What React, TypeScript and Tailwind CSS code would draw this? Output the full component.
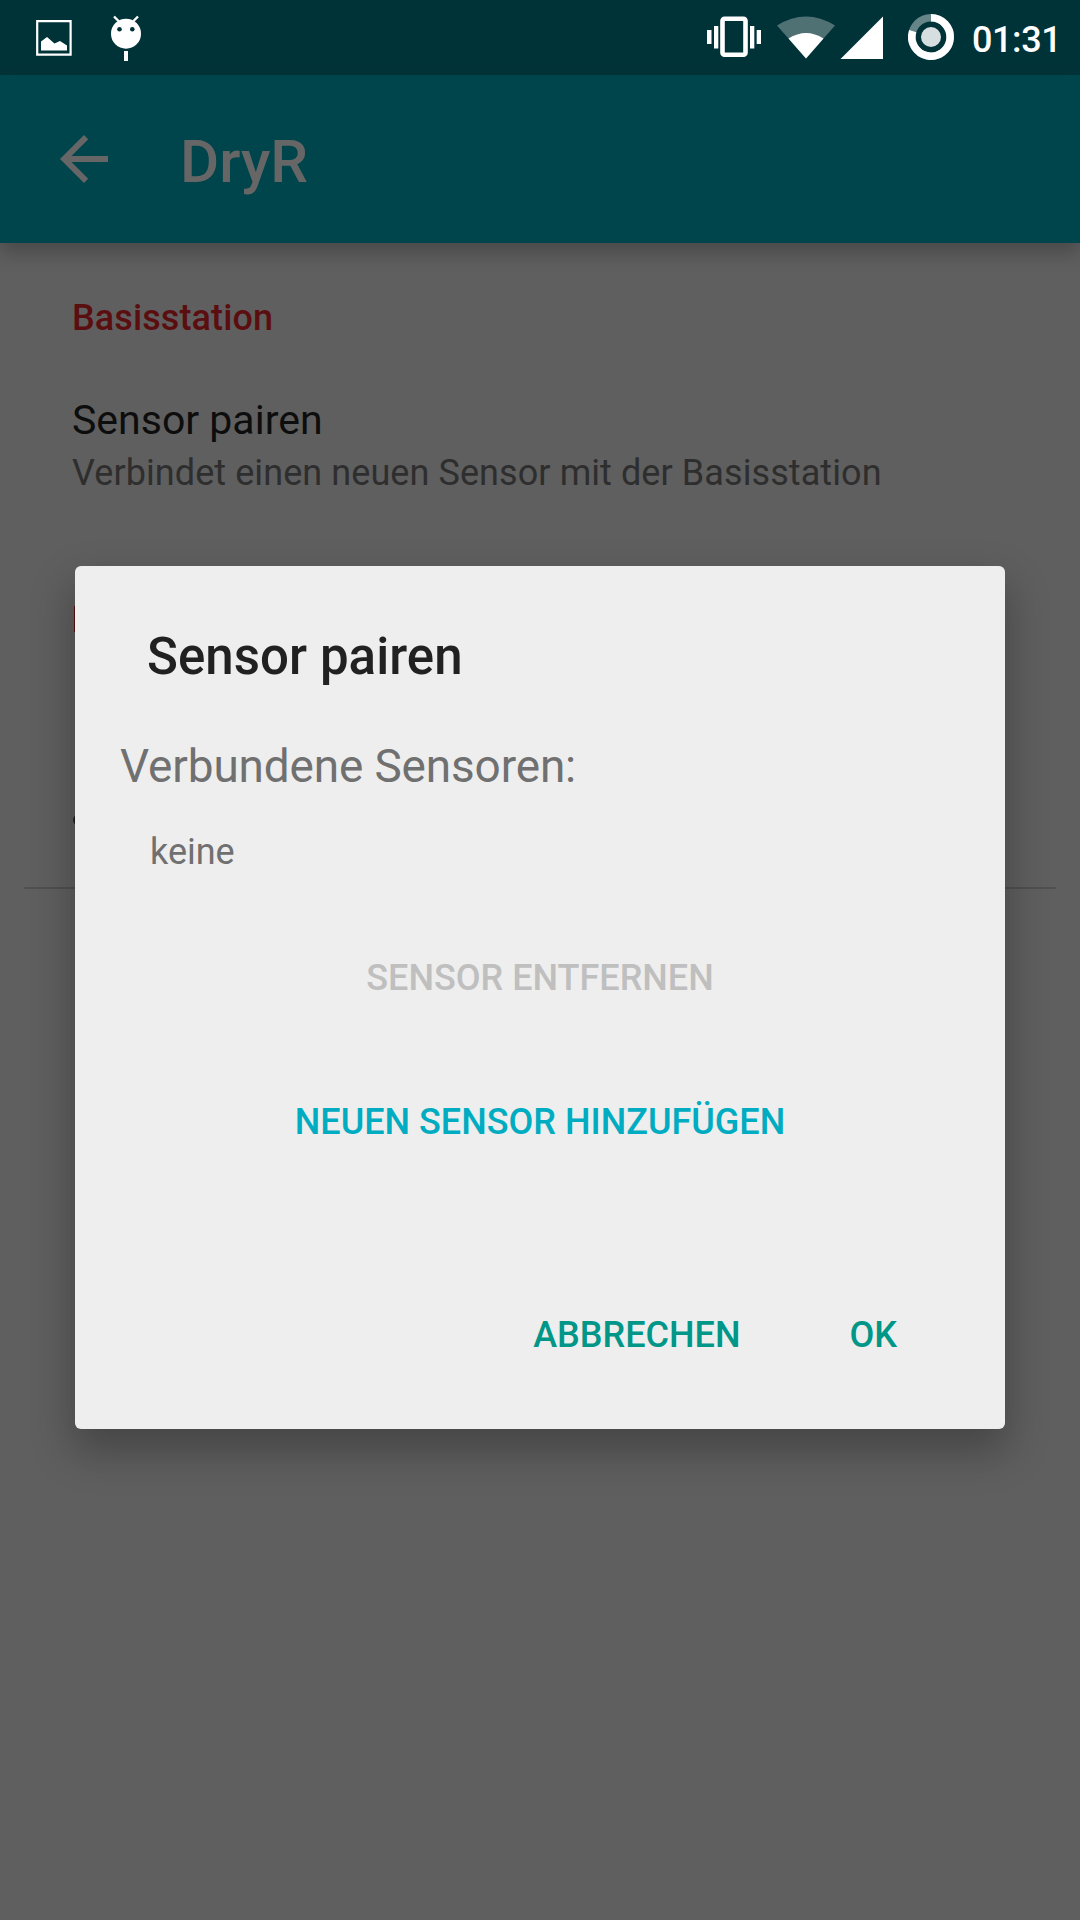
import React from "react";

function StatusBar() {
  return (
    <header className="flex h-[75px] items-center justify-between bg-[#003338] text-white">
      <svg className="h-[75px] w-[200px]" viewBox="0 0 200 75">
        <path d="M37.2 21.2H70.6V54.6H37.2Z" fill="none" stroke="#fff" strokeWidth="2.2" />
        <path d="M41 50.5V41.5L47 37L54.5 43.5L60 41L67 45.5V50.5Z" fill="#fff" />
        <circle cx="126" cy="33.7" r="15" fill="#fff" />
        <path d="M114 16.5L119 21.5M138 16.5L133 21.5" stroke="#fff" strokeWidth="2.4" />
        <circle cx="119.5" cy="29.3" r="2.3" fill="#003338" />
        <circle cx="132.3" cy="29.3" r="2.3" fill="#003338" />
        <path d="M124 51H128V61H124Z" fill="#fff" />
      </svg>
      <div className="flex items-center">
        <svg className="h-[75px] w-[270px]" viewBox="690 0 270 75">
          <rect x="722.5" y="18.7" width="23" height="36" rx="2" fill="none" stroke="#fff" strokeWidth="4.6" />
          <path d="M707 30H711.5V44H707ZM714 26H718.3V48.5H714ZM750 26H754.3V48.5H750ZM756.7 30H761V44H756.7Z" fill="#fff" />
          <path d="M806 58.5L777 25.5Q806 7.5 835 25.5Z" fill="#4f7174" />
          <path d="M806 58.5L788.5 38.5Q806 27.5 823.5 38.5Z" fill="#fff" />
          <path d="M840.5 59L883 16.5V59Z" fill="#fff" />
          <circle cx="931" cy="37" r="19.2" fill="none" stroke="#668588" strokeWidth="7.6" />
          <path d="M931 17.8A19.2 19.2 0 1 1 912.7 31.2" fill="none" stroke="#fff" strokeWidth="7.6" />
          <circle cx="931" cy="37" r="10" fill="#d6dee0" />
        </svg>
        <span className="w-[120px] pt-[5px] pl-[12px] text-[36px] leading-[70px] font-medium tracking-[-0.4px]">01:31</span>
      </div>
    </header>
  );
}

function Toolbar() {
  return (
    <div className="relative flex h-[168px] items-center bg-[#00444c] text-[#666666] shadow-[0_10px_18px_rgba(0,0,0,0.23)]">
      <svg className="ml-[48px] h-[72px] w-[72px]" viewBox="0 0 24 24">
        <path d="M20 11H7.83l5.59-5.59L12 4l-8 8 8 8 1.41-1.41L7.83 13H20v-2z" fill="currentColor" />
      </svg>
      <h1 className="ml-[60px] pt-[6px] text-[60px] leading-[72px] font-medium">DryR</h1>
    </div>
  );
}

function Preferences() {
  return (
    <div className="h-[646px] px-[72px] pt-[50px]">
      <h2 className="text-[36px] leading-[50px] font-medium tracking-[0.1px] text-[#5b0e10]">Basisstation</h2>
      <div className="mt-[52px] text-[41px] leading-[50px] text-[#0d0d0d]">Sensor pairen</div>
      <div className="mt-[3px] text-[36px] leading-[50px] tracking-[0.08px] text-[#2e2e2e]">
        Verbindet einen neuen Sensor mit der Basisstation
      </div>
      <div className="mt-[108px] ml-[2px] h-[26px] w-[4px] bg-[#5b0e10]" />
      <div className="mt-[182px] ml-[1px] h-[12px] w-[6px] rounded-l-full bg-[#222222]" />
    </div>
  );
}

function PairingDialog() {
  return (
    <section className="flex h-[863px] w-[930px] flex-col rounded-[6px] bg-[#eeeeee] shadow-[0_20px_42px_3px_rgba(0,0,0,0.27)]">
      <h2 className="mt-[61px] ml-[72px] text-[51px] leading-[60px] font-medium tracking-[0.06px] text-[#212121]">Sensor pairen</h2>
      <p className="mt-[49px] ml-[45px] text-[45.9px] leading-[60px] tracking-[-0.12px] text-[#707070]">Verbundene Sensoren:</p>
      <p className="mt-[31px] ml-[75px] text-[36px] leading-[50px] text-[#707070]">keine</p>
      <button className="mt-[76px] text-[36px] leading-[50px] font-medium text-[#bfbfbf]">SENSOR ENTFERNEN</button>
      <button className="mt-[94px] text-[36px] leading-[50px] font-medium text-[#00acc1]">NEUEN SENSOR HINZUFÜGEN</button>
      <div className="mt-[163px] flex justify-end gap-[109px] pr-[108px] text-[36px] leading-[50px] font-medium text-[#009688]">
        <button>ABBRECHEN</button>
        <button>OK</button>
      </div>
    </section>
  );
}

export default function App() {
  return (
    <main className="relative h-[1920px] w-[1080px] overflow-hidden bg-[#5f5f5f] font-['Roboto',sans-serif]">
      <StatusBar />
      <Toolbar />
      <Preferences />
      <div className="mx-[24px] -mt-[2px] h-[2px] bg-[#505050]" />
      <div className="absolute inset-x-0 top-[566px] flex justify-center">
        <PairingDialog />
      </div>
    </main>
  );
}
